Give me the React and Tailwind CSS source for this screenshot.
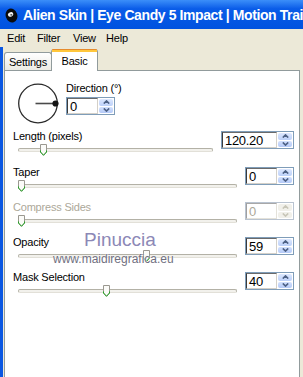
const ROWS = [
  { label: 'Length (pixels)', value: '120.20', frac: 0.1202, wide: true },
  { label: 'Taper', value: '0', frac: 0 },
  { label: 'Compress Sides', value: '0', frac: 0, disabled: true },
  { label: 'Opacity', value: '59', frac: 0.59 },
  { label: 'Mask Selection', value: '40', frac: 0.4 },
]

function Arrow({ up, color }) {
  return (
    <svg width="7" height="4" viewBox="0 0 7 4" className="block">
      <path
        d={up ? 'M0.8 3.6 L3.5 0.9 L6.2 3.6' : 'M0.8 0.4 L3.5 3.1 L6.2 0.4'}
        fill="none"
        stroke={color}
        strokeWidth="1.6"
      />
    </svg>
  )
}

function SpinBox({ value, wide, disabled }) {
  const arrow = disabled ? '#c8c6b8' : '#4d6185'
  return (
    <div
      className={`flex h-[18px] shrink-0 border bg-white ${wide ? 'w-[73px]' : 'w-[49px]'} ${
        disabled ? 'border-[#b9c3d0]' : 'border-[#7f9db9]'
      }`}
    >
      <div
        className={`flex flex-1 items-center border pl-[2px] text-[13px] leading-none tracking-[-0.3px] ${
          disabled
            ? 'border-t-[#a8a8a8] border-l-[#a0a0a0] border-r-[#e4e2da] border-b-[#e4e2da] text-[#aca899]'
            : 'border-t-[#6a6a6a] border-l-[#3c3c3c] border-r-[#d4d0c8] border-b-[#d4d0c8] text-black'
        }`}
      >
        {value}
      </div>
      <div className="flex w-[16px] flex-col gap-[1px] p-[1px]">
        <div
          className={`flex flex-1 items-center justify-center rounded-[2px] ${
            disabled ? 'bg-[#f1f0ea]' : 'bg-linear-to-b from-[#dde8fe] to-[#bcd0f9]'
          }`}
        >
          <Arrow up color={arrow} />
        </div>
        <div
          className={`flex flex-1 items-center justify-center rounded-[2px] ${
            disabled ? 'bg-[#f1f0ea]' : 'bg-linear-to-b from-[#d3e1fd] to-[#b4c9f7]'
          }`}
        >
          <Arrow color={arrow} />
        </div>
      </div>
    </div>
  )
}

function Thumb() {
  return (
    <svg width="7" height="12" viewBox="0 0 7 12" className="block">
      <path d="M0.5 0.5 H6.5 V8 L3.5 11.3 L0.5 8 Z" fill="#fbfbf8" stroke="#9a9890" />
      <path d="M0.5 6.5 V8 L3.5 11.3 L6.5 8 V6.5" fill="none" stroke="#22a322" />
    </svg>
  )
}

function SliderRow({ row, first }) {
  return (
    <div className={`flex pl-[8px] pr-[5px] ${first ? 'h-[36px]' : 'h-[35px]'}`}>
      <div className="flex flex-1 flex-col pr-[8px]">
        <div
          className={`-mt-[1px] text-[11px] leading-[13px] tracking-[-0.2px] ${
            row.disabled ? 'text-[#aca899]' : 'text-black'
          }`}
        >
          {row.label}
        </div>
        <div className="relative ml-[5px] mt-[1px] h-[12px]">
          <div className="mt-[4px] h-[4px] rounded-full border border-[#b3b1a6] border-b-[#e2e0d8] bg-[#f2f1ec]" />
          <div
            className="absolute top-0"
            style={{ left: `calc(3px + ${row.frac} * (100% - 6px) - 3.5px)` }}
          >
            <Thumb />
          </div>
        </div>
      </div>
      <SpinBox value={row.value} wide={row.wide} disabled={row.disabled} />
    </div>
  )
}

export default function App() {
  return (
    <div className="flex h-[377px] w-[303px] flex-col overflow-hidden bg-[#ece9d8] font-['Liberation_Sans',Arial,sans-serif]">
      {/* title bar */}
      <div className="flex h-[29px] shrink-0 items-center whitespace-nowrap bg-linear-to-b from-[#3b8ef9] via-[#0a5ce8] via-[30%] to-[#0052df] pl-[5px] pt-[1px]">
        <svg width="13" height="15" viewBox="0 0 13 15" className="shrink-0">
          <ellipse cx="6.5" cy="7.5" rx="5.8" ry="7" transform="rotate(-18 6.5 7.5)" fill="#0b0b0b" />
          <ellipse cx="5.6" cy="6.4" rx="2.7" ry="2.2" transform="rotate(-25 5.6 6.4)" fill="#f4f4f4" />
          <ellipse cx="6.3" cy="6.8" rx="1.1" ry="0.9" fill="#555" />
        </svg>
        <span className="ml-[5px] text-[14px] font-bold tracking-[-0.4px] text-white">
          Alien Skin | Eye Candy 5 Impact | Motion Trail
        </span>
      </div>

      {/* menu */}
      <div className="flex h-[18px] shrink-0 items-center pl-[7px] text-[11px] tracking-[-0.2px] text-black">
        <span className="w-[30px]">Edit</span>
        <span className="w-[36px]">Filter</span>
        <span className="w-[33px]">View</span>
        <span>Help</span>
      </div>

      <div className="flex flex-1 flex-col border-l-[3px] border-[#0a57e2]">
        {/* tabs */}
        <div className="flex h-[23px] shrink-0 items-end pl-[1px] text-[11px] tracking-[-0.2px]">
          <div className="flex h-[18px] w-[48px] items-center justify-center rounded-t-[3px] border border-b-0 border-[#919b9c] bg-linear-to-b from-white to-[#ecebe4] pt-[1px]">
            Settings
          </div>
          <div className="relative z-10 -mb-[1px] -ml-[1px] flex h-[22px] w-[47px] flex-col rounded-t-[3px] border-x border-[#919b9c] bg-white">
            <div className="h-[1px] rounded-t-[3px] bg-[#e68b2c]" />
            <div className="h-[2px] bg-[#ffc73c]" />
            <div className="flex flex-1 items-center justify-center pb-[1px]">Basic</div>
          </div>
        </div>

        {/* panel */}
        <div className="relative ml-[1px] flex w-[296px] flex-1 flex-col border border-b-0 border-[#919b9c] bg-white">
          <div className="flex pl-[11px] pt-[11px]">
            <svg width="44" height="44" viewBox="0 0 44 44" className="shrink-0">
              <circle cx="22" cy="21.5" r="19.3" fill="none" stroke="#2b2b2b" strokeWidth="1.3" />
              <line x1="19.5" y1="21.5" x2="39.5" y2="21.5" stroke="#4a4a4a" strokeWidth="1.6" />
              <circle cx="39.5" cy="21.5" r="3.1" fill="#151515" />
            </svg>
            <div className="ml-[6px] flex flex-col">
              <div className="text-[11px] leading-[13px] tracking-[-0.2px] text-black">Direction (°)</div>
              <div className="mt-[2px]">
                <SpinBox value="0" />
              </div>
            </div>
          </div>

          <div className="mt-[5px] flex flex-col">
            {ROWS.map((row, i) => (
              <SliderRow key={row.label} row={row} first={i === 0} />
            ))}
          </div>

          {/* watermark */}
          <div className="pointer-events-none absolute left-[79px] top-[159px] text-[19px] leading-none text-[#8c88b6] [text-shadow:0_0_1px_#fff,0_0_2px_#fff]">
            Pinuccia
          </div>
          <div className="pointer-events-none absolute left-[48px] top-[182px] text-[12px] leading-none text-[#6f6f80] [text-shadow:0_0_1px_#fff,0_0_1px_#fff]">
            www.maidiregrafica.eu
          </div>
        </div>
      </div>
    </div>
  )
}
